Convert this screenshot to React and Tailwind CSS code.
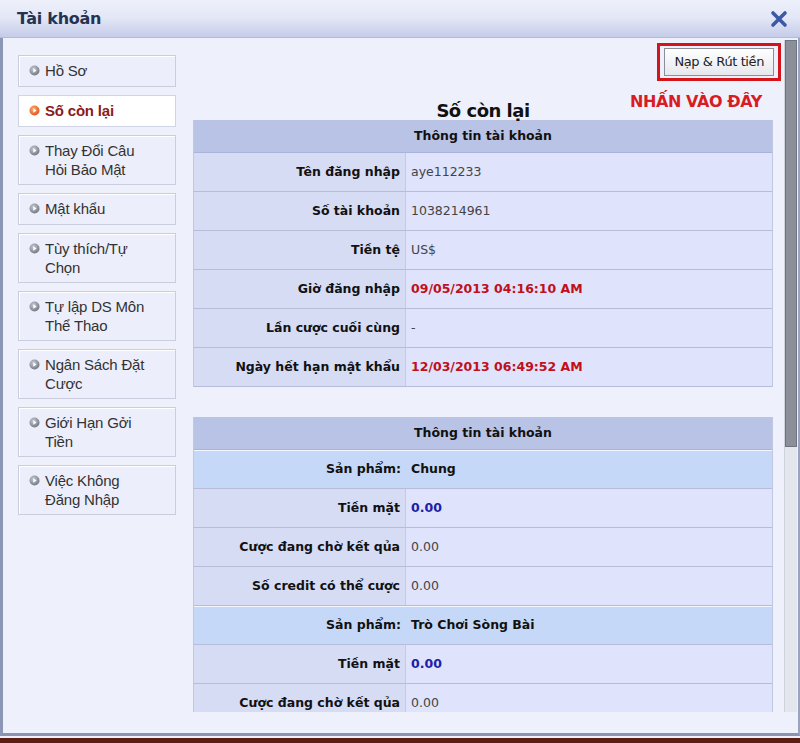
const menu = [
  { label: 'Hồ Sơ' },
  { label: 'Số còn lại', active: true },
  { label: 'Thay Đổi Câu Hỏi Bảo Mật' },
  { label: 'Mật khẩu' },
  { label: 'Tùy thích/Tự Chọn' },
  { label: 'Tự lập DS Môn Thể Thao' },
  { label: 'Ngân Sách Đặt Cược' },
  { label: 'Giới Hạn Gởi Tiền' },
  { label: 'Việc Không Đăng Nhập' },
];

const account = [
  { k: 'Tên đăng nhập', v: 'aye112233' },
  { k: 'Số tài khoản', v: '1038214961' },
  { k: 'Tiền tệ', v: 'US$' },
  { k: 'Giờ đăng nhập', v: '09/05/2013 04:16:10 AM', red: true },
  { k: 'Lần cược cuối cùng', v: '-' },
  { k: 'Ngày hết hạn mật khẩu', v: '12/03/2013 06:49:52 AM', red: true },
];

const balance = [
  { k: 'Sản phẩm:', v: 'Chung', product: true },
  { k: 'Tiền mặt', v: '0.00', blue: true },
  { k: 'Cược đang chờ kết qủa', v: '0.00' },
  { k: 'Số credit có thể cược', v: '0.00' },
  { k: 'Sản phẩm:', v: 'Trò Chơi Sòng Bài', product: true },
  { k: 'Tiền mặt', v: '0.00', blue: true },
  { k: 'Cược đang chờ kết qủa', v: '0.00' },
];

function Bullet({ active }) {
  return (
    <svg width="11" height="11" viewBox="0 0 11 11" className="shrink-0 mt-[4px]">
      <defs>
        <radialGradient id={active ? 'ba' : 'bg'} cx="40%" cy="35%" r="70%">
          <stop offset="0%" stopColor={active ? '#ffb070' : '#c8ccd4'} />
          <stop offset="100%" stopColor={active ? '#d8501a' : '#6e737e'} />
        </radialGradient>
      </defs>
      <circle cx="5.5" cy="5.5" r="5" fill={`url(#${active ? 'ba' : 'bg'})`} />
      <path d="M4.3 3.2 L7.6 5.5 L4.3 7.8 Z" fill="#fff" />
    </svg>
  );
}

function MenuItem({ label, active }) {
  return (
    <div
      className={`flex items-start gap-[5px] pl-[10px] pr-2 py-[5px] border min-h-[32px] text-[15px] leading-[19px] tracking-[-0.2px] ${
        active
          ? 'bg-white border-[#d0d4e4] text-[#8a1c1c] font-bold'
          : 'bg-[#eceffb] border-[#c9cddd] shadow-[inset_1px_1px_0_#fff] text-[#333]'
      }`}
    >
      <Bullet active={active} />
      <span className="max-w-[108px]">{label}</span>
    </div>
  );
}

function Row({ k, v, red, blue, product }) {
  const valueColor = red
    ? 'text-[#c0101a] font-bold'
    : blue
    ? 'text-[#1c20a8] font-bold'
    : product
    ? 'text-[#111] font-bold'
    : 'text-[#444]';
  return (
    <div
      className={`flex h-[39px] border-b border-[#b7bdd8] shadow-[inset_0_1px_0_#f4f6ff] ${
        product ? 'bg-[#c6d8f8]' : ''
      }`}
    >
      <div
        className={`w-[212px] flex items-center justify-end pr-[5px] font-bold text-[#111] ${
          product ? '' : 'bg-[#d6dcf4] border-r border-[#c3cae6]'
        }`}
      >
        {k}
      </div>
      <div className={`flex-1 flex items-center pl-[5px] ${product ? '' : 'bg-[#dfe3fb]'} ${valueColor}`}>
        {v}
      </div>
    </div>
  );
}

function InfoTable({ rows }) {
  return (
    <div className="border-l border-r border-[#c0c7e3] text-[12.5px] font-['DejaVu_Sans',sans-serif]">
      <div className="h-[33px] bg-[#b9c3e6] flex items-center justify-center font-bold text-[#111] border-b border-[#aab4da]">
        Thông tin tài khoản
      </div>
      {rows.map((r, i) => (
        <Row key={i} {...r} />
      ))}
    </div>
  );
}

export default function App() {
  return (
    <div className="w-[800px] h-[743px] bg-[#eef0fc] flex flex-col overflow-hidden font-['Liberation_Sans',Arial,sans-serif]">
      {/* Title bar */}
      <div className="h-[38px] shrink-0 flex items-center justify-between pl-[17px] pr-[12px] bg-gradient-to-b from-[#eef1fb] via-[#e2e6f6] to-[#c5cce8] border-b border-[#b3bbda]">
        <span className="text-[16px] font-bold text-[#26324f] font-['DejaVu_Sans',sans-serif] tracking-[-0.3px]">
          Tài khoản
        </span>
        <svg width="18" height="18" viewBox="0 0 18 18">
          <path d="M3 3 L15 15 M15 3 L3 15" stroke="#3b5aa6" strokeWidth="3.6" strokeLinecap="round" />
        </svg>
      </div>

      {/* Body */}
      <div className="flex-1 flex border-l-[3px] border-[#8c97b6] border-r-[2px] border-r-[#9aa3c0] border-b-[3px] border-b-[#8a93b0] min-h-0">
        {/* Sidebar */}
        <div className="w-[190px] shrink-0 pl-[15px] pr-[17px] pt-[17px] flex flex-col gap-[8px]">
          {menu.map((m) => (
            <MenuItem key={m.label} {...m} />
          ))}
        </div>

        {/* Main */}
        <div className="flex-1 flex min-h-0">
          <div className="w-[590px] shrink-0 pb-[21px] flex flex-col min-h-0">
            <div className="flex-1 overflow-hidden">
              <div className="flex justify-end pt-[5px] pr-[2px]">
                <div className="border-[3px] border-[#d41418] px-[4px] py-[2px]">
                  <button className="h-[28px] px-[9px] bg-gradient-to-b from-white to-[#e6e8ee] border border-[#8b8f99] text-[13px] text-[#222] font-['DejaVu_Sans',sans-serif] tracking-[-0.4px]">
                    Nạp &amp; Rút tiền
                  </button>
                </div>
              </div>
              <div className="relative h-[39px] w-[580px]">
                <div className="absolute left-0 right-0 top-[16px] text-center text-[18px] font-bold text-[#111] font-['DejaVu_Sans',sans-serif] tracking-[-0.5px]">
                  Số còn lại
                </div>
                <div className="absolute right-[11px] top-[9px] text-[16px] font-bold text-[#d81c24] font-['DejaVu_Sans',sans-serif] tracking-[-0.4px]">
                  NHẤN VÀO ĐÂY
                </div>
              </div>
              <div className="w-[580px]">
                <InfoTable rows={account} />
                <div className="h-[30px]" />
                <InfoTable rows={balance} />
              </div>
            </div>
          </div>
          {/* Scrollbar */}
          <div className="w-[13px] ml-[1px] mt-[2px] mb-[21px] bg-[#e4e6ee] border-l border-[#cfd2dc] flex flex-col">
            <div className="h-[407px] bg-[#8b8f99] border border-[#6f737c]" />
          </div>
        </div>
      </div>
      <div className="h-[2px] bg-[#eef0fc] shrink-0" />
      <div className="h-[5px] bg-[#5b1d14] shrink-0" />
    </div>
  );
}
